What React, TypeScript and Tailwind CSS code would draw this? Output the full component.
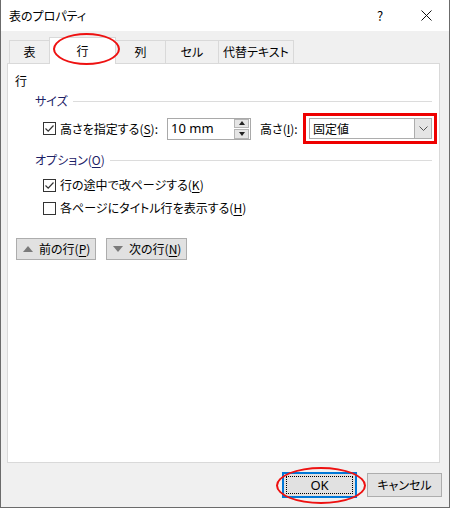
import React from 'react';

const font = "[font-family:'Noto_Sans_CJK_JP','Noto_Sans',sans-serif] [font-feature-settings:'palt']";

const U: React.FC<{ children: React.ReactNode }> = ({ children }) => (
  <span className="underline underline-offset-2 decoration-1">{children}</span>
);

const CheckBox: React.FC<{ checked?: boolean }> = ({ checked }) => (
  <span className="w-[13px] h-[13px] border border-[#333] bg-white flex items-center justify-center shrink-0">
    {checked && (
      <svg width="11" height="11" viewBox="0 0 11 11">
        <path d="M1.5 5.5 L4.2 8.2 L9.5 2.5" fill="none" stroke="#333" strokeWidth="1.2" />
      </svg>
    )}
  </span>
);

const GroupHead: React.FC<{ children: React.ReactNode }> = ({ children }) => (
  <div className="flex items-center h-[16px] pl-[27px] pr-[7px]">
    <span className="text-[#1c2166] whitespace-nowrap">{children}</span>
    <div className="flex-1 h-px bg-[#dcdcdc] ml-[5px]" />
  </div>
);

const tabs = [
  { label: '表', w: 'w-[41px]' },
  { label: '行', w: 'w-[67px]', active: true },
  { label: '列', w: 'w-[51px]' },
  { label: 'セル', w: 'w-[54px]' },
  { label: '代替テキスト', w: 'w-[76px]' },
];

export default function App() {
  return (
    <div className={`relative w-[450px] h-[508px] bg-[#f0f0f0] border-x border-b border-[#6b6b6b] text-[12px] text-black leading-none ${font}`}>
      {/* Title bar */}
      <div className="h-[31px] bg-white flex items-center pl-[8px]">
        <span className="flex-1">表のプロパティ</span>
        <span className="w-[46px] text-center text-[13px]">?</span>
        <span className="w-[46px] flex justify-center">
          <svg width="11" height="11" viewBox="0 0 11 11">
            <path d="M0.5 0.5 L10.5 10.5 M10.5 0.5 L0.5 10.5" stroke="#111" strokeWidth="1" />
          </svg>
        </span>
      </div>

      {/* Tabs */}
      <div className="flex items-end h-[32px] pl-[8px] relative z-10">
        {tabs.map((t, i) =>
          t.active ? (
            <div
              key={t.label}
              className={`${t.w} h-[27px] -ml-px bg-white border border-b-0 border-[#d9d9d9] flex items-center justify-center pb-[1px] -mb-px`}
            >
              {t.label}
            </div>
          ) : (
            <div
              key={t.label}
              className={`${t.w} h-[23px] ${i === 0 ? '' : '-ml-px'} border border-b-0 border-[#d9d9d9] flex items-center justify-center`}
            >
              {t.label}
            </div>
          )
        )}
      </div>

      {/* Panel */}
      <div className="ml-[6px] w-[433px] h-[400px] bg-white border border-[#d9d9d9] pt-[9px]">
        <div className="pl-[7px] h-[16px] flex items-center">行</div>
        <div className="mt-[4px]">
          <GroupHead>サイズ</GroupHead>
        </div>

        <div className="flex items-center mt-[4px] h-[31px] pl-[35px]">
          <CheckBox checked />
          <span className="ml-[4px] w-[107px]">
            高さを指定する(<U>S</U>):
          </span>
          <div className="w-[84px] h-[22px] border border-[#a9a9a9] flex items-center bg-white">
            <span className="flex-1 pl-[3px] text-[13px] [font-family:'Noto_Sans',sans-serif]">10 mm</span>
            <div className="w-[15px] h-[20px] mr-[1px] flex flex-col gap-px">
              <div className="flex-1 bg-[#e5e5e5] border border-[#b5b5b5] flex items-center justify-center">
                <svg width="6" height="4" viewBox="0 0 6 4"><path d="M0 4 L3 0 L6 4 Z" fill="#222" /></svg>
              </div>
              <div className="flex-1 bg-[#e5e5e5] border border-[#b5b5b5] flex items-center justify-center">
                <svg width="6" height="4" viewBox="0 0 6 4"><path d="M0 0 L6 0 L3 4 Z" fill="#222" /></svg>
              </div>
            </div>
          </div>
          <span className="ml-[9px] w-[43px]">
            高さ(<U>I</U>):
          </span>
          <div className="w-[134px] h-[31px] border-[3px] border-[#ee0000] p-[2px] pl-[3px]">
            <div className="h-full border border-[#adadad] bg-white flex items-center">
              <span className="flex-1 pl-[3px]">固定値</span>
              <div className="w-[17px] h-full bg-[#e5e5e5] border-l border-[#adadad] flex items-center justify-center">
                <svg width="9" height="5" viewBox="0 0 9 5"><path d="M0.5 0.5 L4.5 4.5 L8.5 0.5" fill="none" stroke="#555" strokeWidth="1" /></svg>
              </div>
            </div>
          </div>
        </div>

        <div className="mt-[8px]">
          <GroupHead>
            オプション(<U>O</U>)
          </GroupHead>
        </div>

        <div className="flex items-center mt-[9px] h-[16px] pl-[35px]">
          <CheckBox checked />
          <span className="ml-[4px]">
            行の途中で改ページする(<U>K</U>)
          </span>
        </div>
        <div className="flex items-center mt-[7px] h-[16px] pl-[35px]">
          <CheckBox />
          <span className="ml-[4px]">
            各ページにタイトル行を表示する(<U>H</U>)
          </span>
        </div>

        <div className="flex gap-[10px] mt-[22px] pl-[8px]">
          <button className="w-[80px] h-[22px] bg-[#e1e1e1] border border-[#adadad] flex items-center pl-[6px]">
            <svg width="10" height="6" viewBox="0 0 10 6" className="mr-[6px]"><path d="M0 6 L5 0 L10 6 Z" fill="#7a7a7a" /></svg>
            前の行(<U>P</U>)
          </button>
          <button className="w-[81px] h-[22px] bg-[#e1e1e1] border border-[#adadad] flex items-center pl-[6px]">
            <svg width="10" height="6" viewBox="0 0 10 6" className="mr-[6px]"><path d="M0 0 L10 0 L5 6 Z" fill="#7a7a7a" /></svg>
            次の行(<U>N</U>)
          </button>
        </div>
      </div>

      {/* Bottom buttons */}
      <div className="flex justify-end items-center gap-[10px] pr-[7px] mt-[9px]">
        <button className="w-[75px] h-[26px] bg-[#e1e1e1] border-2 border-[#0078d7] p-[2px]">
          <span className="w-full h-full border border-dotted border-black flex items-center justify-center [font-family:'Noto_Sans',sans-serif] text-[13px]">
            OK
          </span>
        </button>
        <button className="w-[75px] h-[24px] bg-[#e1e1e1] border border-[#adadad] flex items-center justify-center">
          キャンセル
        </button>
      </div>

      {/* Red annotation ellipses */}
      <div className="absolute left-[52px] top-[33px] w-[67px] h-[32px] rounded-[50%] border-2 border-[#ee1111] z-20 pointer-events-none" />
      <div className="absolute left-[275px] top-[467px] w-[90px] h-[37px] rounded-[50%] border-2 border-[#ee1111] z-20 pointer-events-none" />
    </div>
  );
}
